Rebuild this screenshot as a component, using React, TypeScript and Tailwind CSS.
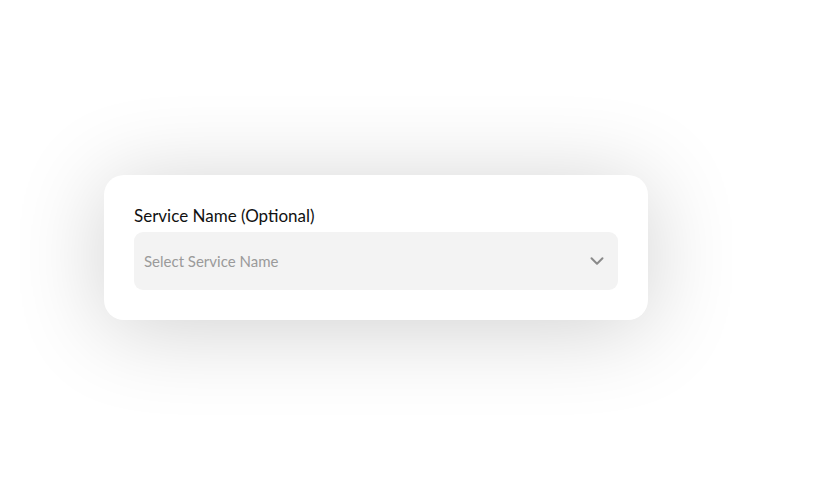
import { ChevronDown } from "lucide-react";

export default function App() {
    return (
        <div className="min-h-[495px] w-full bg-white pt-[175px] pl-[104px] font-['Lato','Noto_Sans',sans-serif]">
            {/* Service select card */}
            <div className="w-[544px] rounded-[20px] bg-white px-[30px] pt-[30px] pb-[30px] shadow-[0_8px_90px_rgba(0,0,0,0.19)]">
                <label className="mb-[5px] block text-[17px] leading-[22px] text-[#111]">
                    Service Name (Optional)
                </label>
                <button className="flex h-[58px] w-full items-center justify-between rounded-[9px] bg-[#f3f3f3] pl-[10px] pr-[10px] text-left">
                    <span className="text-[15px] text-[#9a9a9a]">Select Service Name</span>
                    <ChevronDown className="h-[22px] w-[22px] text-[#8a8a8a]" strokeWidth={2.2} />
                </button>
            </div>
        </div>
    );
}
